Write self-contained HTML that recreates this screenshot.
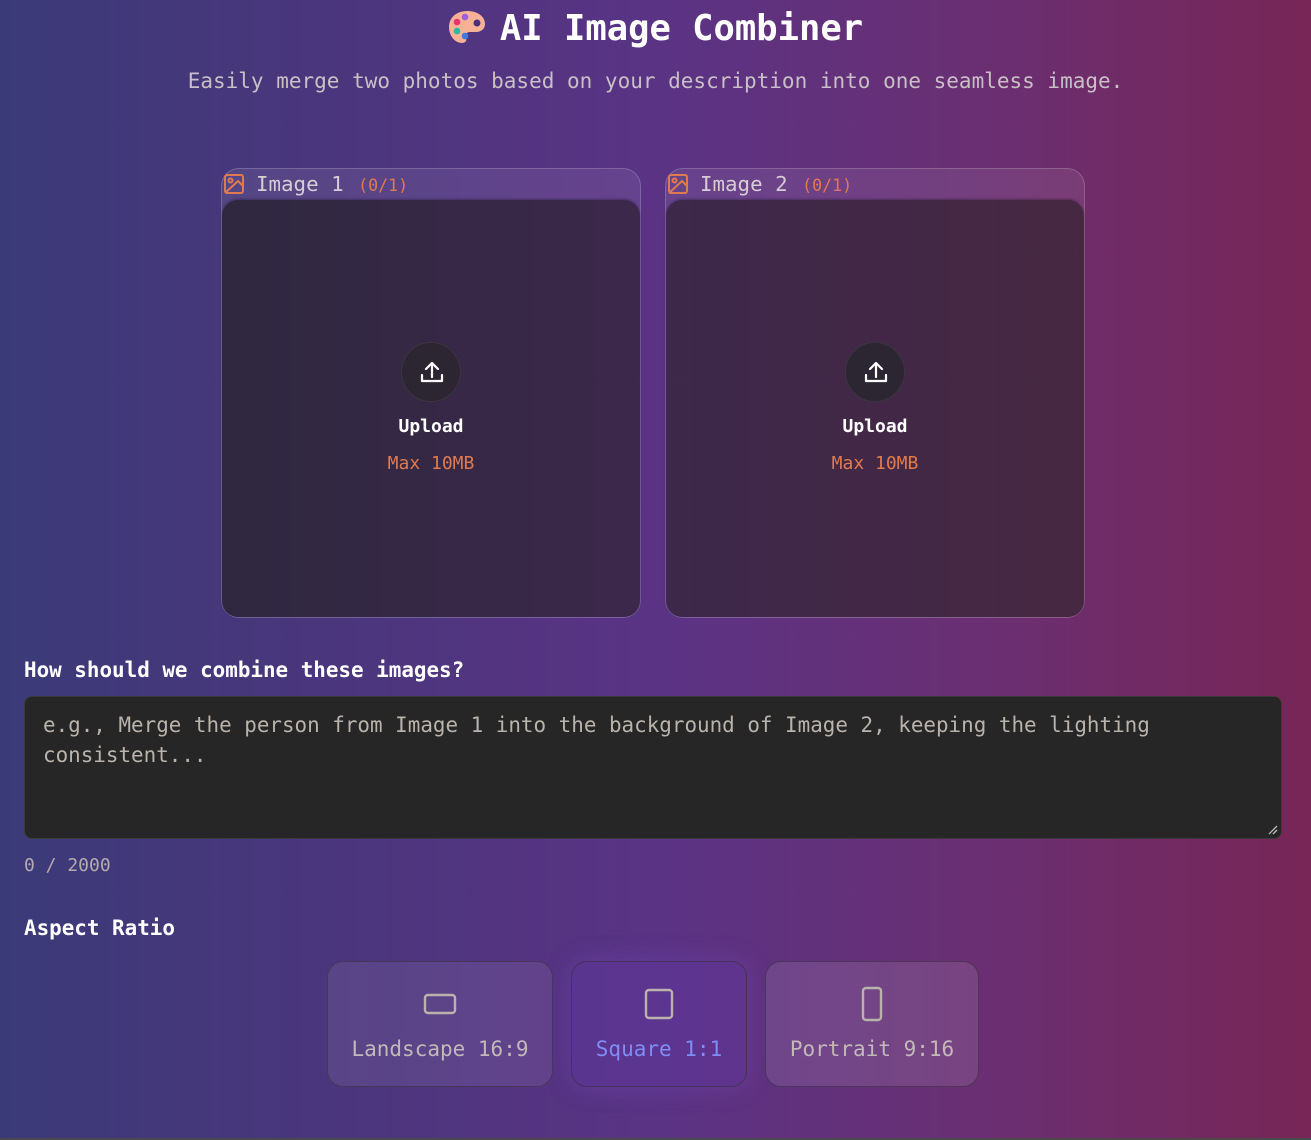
<!DOCTYPE html>
<html><head><meta charset="utf-8"><style>
*{box-sizing:border-box;margin:0;padding:0}
html,body{width:1311px;height:1140px;overflow:hidden}
body{font-family:"DejaVu Sans Mono","Liberation Mono",monospace;background:linear-gradient(90deg,#3b3a78 0%,#4a367c 25%,#5a3385 50%,#6a2f72 75%,#772656 100%);position:relative;color:#fff}
body:after{content:"";position:absolute;left:0;right:0;bottom:0;height:2px;background:#4a4a4a}
.abs{position:absolute}
h1{position:absolute;top:8px;left:0;width:1311px;text-align:center;font-size:35.5px;font-weight:bold;color:#fff;letter-spacing:0}
h1 svg{vertical-align:-5px;margin-right:14px}
.sub{top:69px;left:0;width:1311px;text-align:center;font-size:21px;color:#c9bfc6}
.card{border:1px solid rgba(255,255,255,.18);border-radius:18px;background:rgba(255,255,255,.08);width:420px;height:450px;top:168px}
.card .hd{position:absolute;left:2px;top:3px;font-size:20.8px;color:#d6ccd4}
.card .hd small{font-size:16.6px;color:#e07a4e;margin-left:2px}
.card .hd svg{vertical-align:-3px;margin-right:12px}
.inner{position:absolute;left:0;right:0;top:31px;bottom:0;border-radius:16px;background:rgba(30,28,34,.62);box-shadow:0 -1px 2px rgba(0,0,0,.3)}
.circ{position:absolute;left:179px;top:142px;width:60px;height:60px;border-radius:50%;background:#2c2633;border:1px solid #3b3540}
.up{position:absolute;left:0;width:100%;top:216px;text-align:center;font-size:18px;font-weight:bold;color:#fff}
.mx{position:absolute;left:0;width:100%;top:253px;text-align:center;font-size:18px;color:#e07a4e}
.lbl{font-size:20.9px;font-weight:bold;color:#fff}
.ta{left:24px;top:696px;width:1258px;height:143px;background:#262626;border:1px solid #3a3a3a;border-radius:8px;padding:13px 18px;font-size:20.9px;line-height:30px;color:#b9b3ab}
.cnt{left:24px;top:855px;font-size:18px;color:#b5aab0}
.btn{top:961px;height:126px;border:1px solid rgba(60,50,70,.7);border-radius:16px;text-align:center;font-size:21px;color:#c2b9b8}
.btn svg{position:absolute;left:50%;transform:translateX(-50%)}
.btn span{position:absolute;left:0;width:100%;top:75px}
</style></head><body>
<h1><svg width="38" height="36" viewBox="0 0 38 36"><path d="M19 2C8 2 1 9 1 18c0 9 6 16 13 16 4 0 5-3 4-6-1-3 1-5 4-5h6c5 0 9-3 9-8C37 7 29 2 19 2z" fill="#f6b196"/><circle cx="29" cy="14" r="3.5" fill="#4b2f7c"/><circle cx="9" cy="13" r="3.3" fill="#e8336e"/><circle cx="17" cy="8" r="3.3" fill="#9b5fe0"/><circle cx="9" cy="22" r="3.3" fill="#2fb5a2"/><circle cx="17" cy="27" r="3.3" fill="#3b7de0"/></svg>AI Image Combiner</h1>
<div class="abs sub">Easily merge two photos based on your description into one seamless image.</div>

<div class="abs card" style="left:221px">
 <div class="hd"><svg width="20" height="20" viewBox="0 0 20 20" fill="none" stroke="#e07a4e" stroke-width="2"><rect x="1" y="1" width="18" height="18" rx="2"/><circle cx="6.5" cy="6.5" r="2"/><path d="M19 12l-5-5L1 19"/></svg>Image 1 <small>(0/1)</small></div>
 <div class="inner" style="background:linear-gradient(90deg,rgba(40,34,52,.85),rgba(50,34,58,.8))">
  <div class="circ"><svg width="60" height="60" viewBox="0 0 60 60" fill="none" stroke="#fff" stroke-width="2.2" stroke-linecap="round" stroke-linejoin="round"><path d="M30 20v14M24 26l6-6 6 6M20 32v6h20v-6"/></svg></div>
  <div class="up">Upload</div><div class="mx">Max 10MB</div>
 </div>
</div>
<div class="abs card" style="left:665px">
 <div class="hd"><svg width="20" height="20" viewBox="0 0 20 20" fill="none" stroke="#e07a4e" stroke-width="2"><rect x="1" y="1" width="18" height="18" rx="2"/><circle cx="6.5" cy="6.5" r="2"/><path d="M19 12l-5-5L1 19"/></svg>Image 2 <small>(0/1)</small></div>
 <div class="inner" style="background:linear-gradient(90deg,rgba(50,34,58,.8),rgba(58,34,52,.8))">
  <div class="circ"><svg width="60" height="60" viewBox="0 0 60 60" fill="none" stroke="#fff" stroke-width="2.2" stroke-linecap="round" stroke-linejoin="round"><path d="M30 20v14M24 26l6-6 6 6M20 32v6h20v-6"/></svg></div>
  <div class="up">Upload</div><div class="mx">Max 10MB</div>
 </div>
</div>

<div class="abs lbl" style="left:24px;top:658px">How should we combine these images?</div>
<div class="abs ta">e.g., Merge the person from Image 1 into the background of Image 2, keeping the lighting consistent...
<svg class="abs" style="right:3px;bottom:3px" width="10" height="10" viewBox="0 0 10 10" stroke="#bbb" stroke-width="1.3"><path d="M9 1L1 9M9 5L5 9"/></svg></div>
<div class="abs cnt">0 / 2000</div>

<div class="abs lbl" style="left:24px;top:916px">Aspect Ratio</div>
<div class="abs btn" style="left:327px;width:226px;background:rgba(255,255,255,.08)"><svg style="top:31px" width="34" height="22" viewBox="0 0 34 22" fill="none" stroke="#b9b3ab" stroke-width="2.4"><rect x="2" y="2" width="30" height="18" rx="3"/></svg><span>Landscape 16:9</span></div>
<div class="abs btn" style="left:571px;width:176px;background:rgba(95,55,160,.45);box-shadow:0 0 24px rgba(120,80,200,.35);color:#7f8df5"><svg style="top:26px" width="30" height="32" viewBox="0 0 30 32" fill="none" stroke="#b9b3ab" stroke-width="2.4"><rect x="2" y="2" width="26" height="28" rx="3"/></svg><span>Square 1:1</span></div>
<div class="abs btn" style="left:765px;width:214px;background:rgba(255,255,255,.1)"><svg style="top:24px" width="22" height="36" viewBox="0 0 22 36" fill="none" stroke="#b9b3ab" stroke-width="2.4"><rect x="2" y="2" width="18" height="32" rx="3"/></svg><span>Portrait 9:16</span></div>
</body></html>
